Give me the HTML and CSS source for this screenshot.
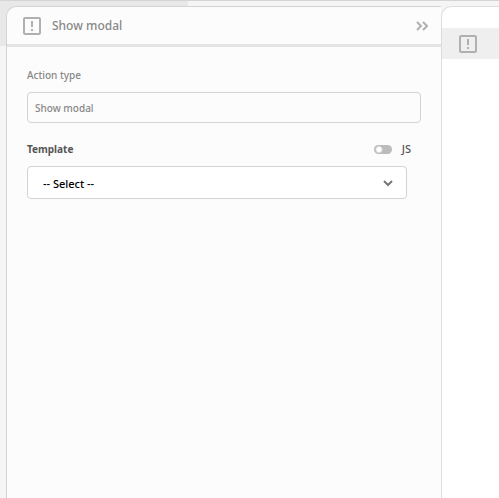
FILE: index.html
```html
<!DOCTYPE html>
<html lang="en">
<head>
<meta charset="utf-8">
<title>Show modal</title>
<link rel="stylesheet" href="styles.css">
</head>
<body>
<div class="workspace">
  <main class="panel">
    <header class="panel-header">
      <svg class="modal-icon" viewBox="0 0 18 18" aria-hidden="true"><rect x="1" y="1" width="16" height="16" rx="1"/><path d="M9 4v6M9 12v2"/></svg>
      <h1 class="title">Show modal</h1>
      <button class="collapse" type="button" aria-label="Collapse panel">
        <svg class="chevrons" viewBox="0 0 12 10" aria-hidden="true"><path d="M1 1l4 4-4 4M7 1l4 4-4 4"/></svg>
      </button>
    </header>
    <form class="form">
      <label class="label" for="action-type">Action type</label>
      <input class="text-field" id="action-type" type="text" value="Show modal" readonly>
      <div class="field-head">
        <label class="label strong" for="template">Template</label>
        <label class="toggle"><input class="switch" type="checkbox">JS</label>
      </div>
      <div class="select-wrap">
        <select class="select" id="template"><option>-- Select --</option></select>
        <svg class="arrow" viewBox="0 0 10 7" aria-hidden="true"><path d="M1 1l4 4 4-4"/></svg>
      </div>
    </form>
  </main>
  <aside class="actions">
    <button class="action" type="button" aria-label="Modal action">
      <svg class="modal-icon" viewBox="0 0 18 18" aria-hidden="true"><rect x="1" y="1" width="16" height="16" rx="1"/><path d="M9 4v6M9 12v2"/></svg>
    </button>
  </aside>
</div>
</body>
</html>
```
FILE: styles.css
```css
* {
  box-sizing: border-box;
}

body {
  margin: 0;
  font-family: "Noto Sans", "Open Sans", sans-serif;
  font-size: 10px;
  font-weight: 500;
  color: #888;
}

button {
  padding: 0;
  border: 0;
  background: none;
}

.workspace {
  display: flex;
  min-height: 100vh;
  padding: 5px 0 0 6px;
  border-top: 1px solid #d5d5d5;
  background: linear-gradient(#e8e8e8, #e8e8e8) 0 0 / 188px 45px no-repeat #f5f5f5;
}

.panel {
  flex: 1;
  min-width: 0;
  border: solid #d3d3d3;
  border-width: 1px 0 0 1px;
  border-radius: 10px 0 0 0;
  background: #fcfcfc;
}

.panel-header {
  display: flex;
  align-items: center;
  height: 40px;
  padding: 0 13px 0 16px;
  border-bottom: 3px solid #e4e4e4;
}

.modal-icon {
  width: 18px;
  height: 18px;
  fill: none;
  stroke: #b0b0b0;
  stroke-width: 2;
}

.title {
  flex: 1;
  margin: 0 0 0 11px;
  font-size: 12px;
  font-weight: 500;
}

.collapse {
  display: flex;
}

.chevrons {
  width: 12px;
  height: 10px;
  fill: none;
  stroke: #b0b0b0;
  stroke-width: 2;
}

.form {
  padding: 20px 20px 0;
}

.label {
  display: block;
  line-height: 16px;
}

.strong {
  font-weight: 700;
  color: #555;
}

.text-field {
  display: block;
  width: 100%;
  height: 31px;
  margin-top: 9px;
  padding: 0 7px;
  border: 1px solid #d3d3d3;
  border-radius: 4px;
  background: transparent;
  font: inherit;
  color: #888;
}

.field-head {
  display: flex;
  align-items: center;
  justify-content: space-between;
  margin: 18px 10px 9px 0;
}

.toggle {
  display: flex;
  align-items: center;
  gap: 10px;
  line-height: 16px;
  font-size: 11px;
  color: #555;
}

.switch {
  appearance: none;
  width: 18px;
  height: 9px;
  margin: 0;
  border-radius: 5px;
  background: radial-gradient(circle at 5px 50%, #fff 2px, #bbb 4px);
}

.select-wrap {
  position: relative;
  margin-right: 14px;
}

.select {
  display: block;
  appearance: none;
  width: 100%;
  height: 33px;
  padding: 2px 15px 0;
  border: 1px solid #d3d3d3;
  border-radius: 4px;
  background: #fff;
  font: inherit;
  font-size: 11px;
  color: #000;
}

.arrow {
  position: absolute;
  top: 14px;
  right: 14px;
  width: 10px;
  height: 7px;
  fill: none;
  stroke: #777;
  stroke-width: 2;
  pointer-events: none;
}

.actions {
  width: 58px;
  padding-top: 21px;
  border: solid #ddd;
  border-width: 1px 0 0 1px;
  border-radius: 10px 0 0 0;
  background: #fff;
}

.action {
  display: flex;
  align-items: center;
  width: 100%;
  height: 31px;
  padding-left: 17px;
  background: #efefef;
}
```
